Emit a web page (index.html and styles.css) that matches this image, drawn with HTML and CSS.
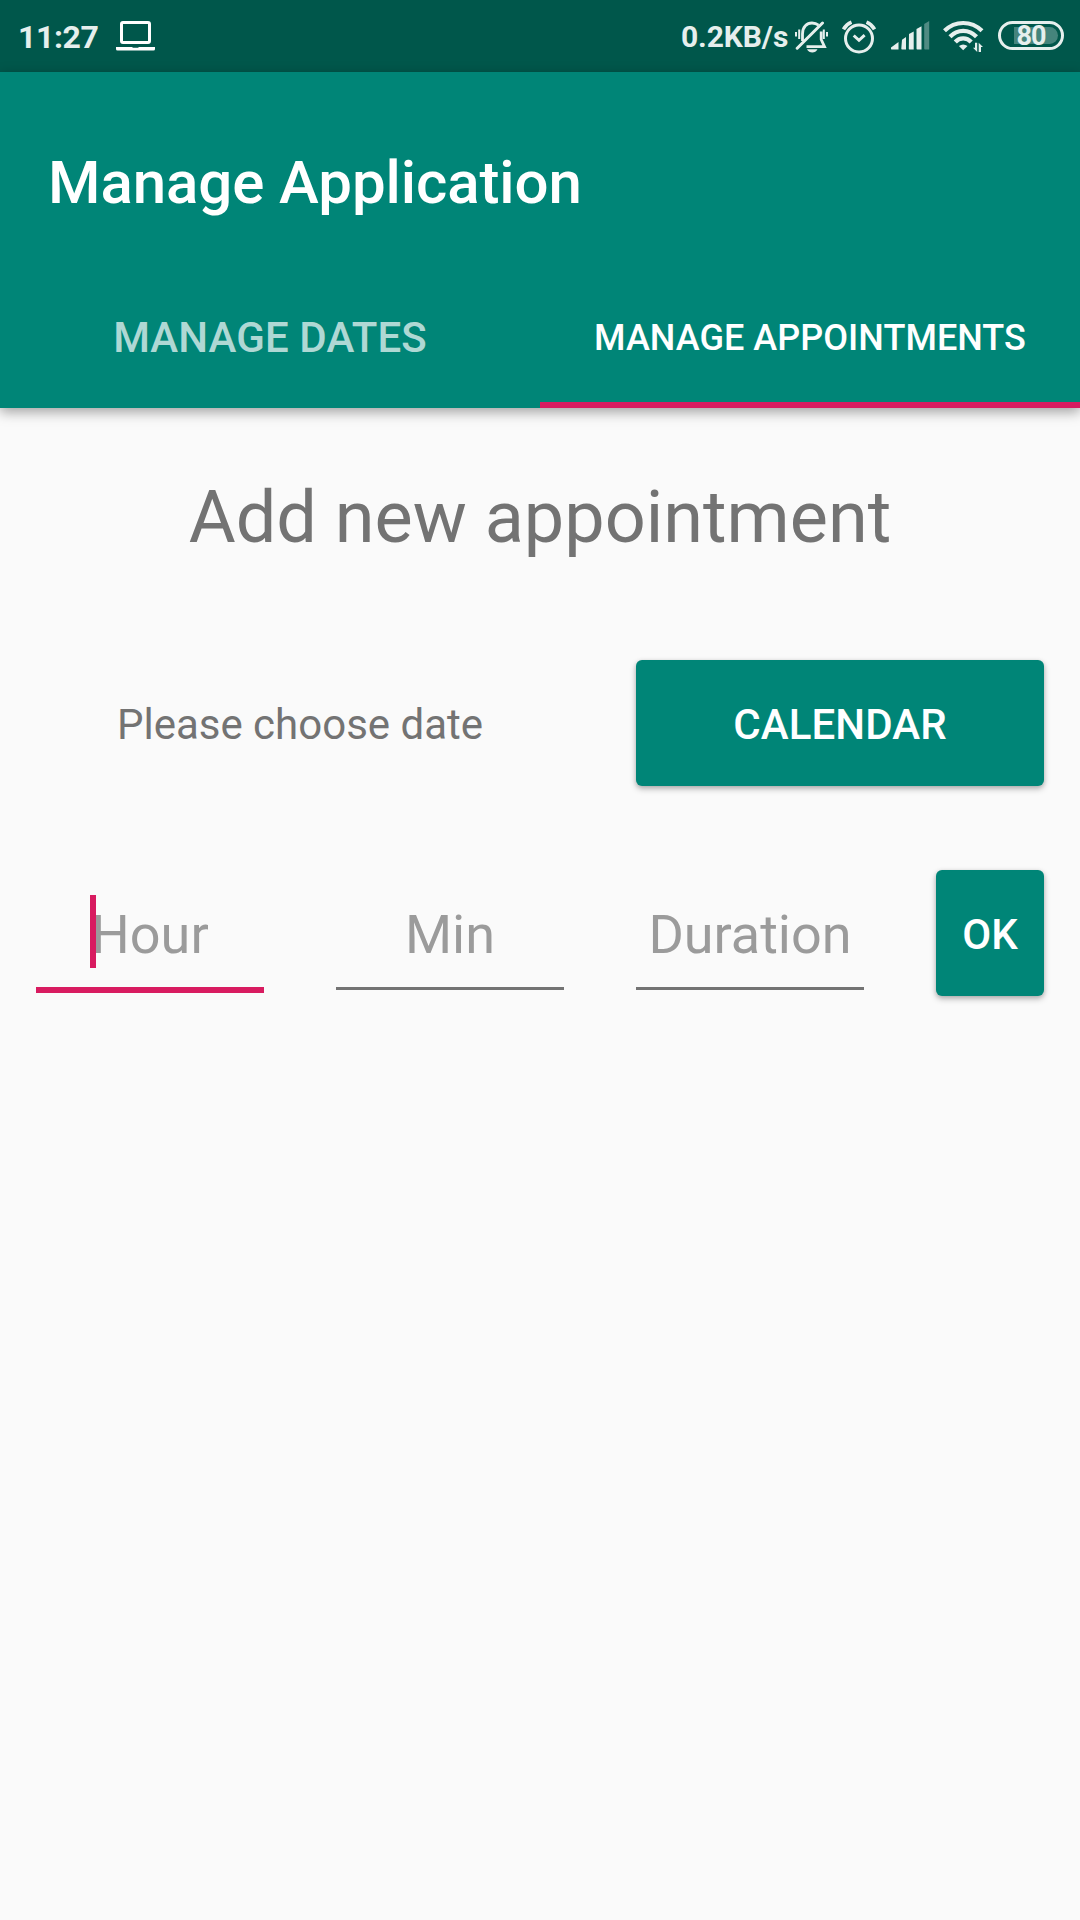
FILE: index.html
```html
<!DOCTYPE html>
<html lang="en">
<head>
<meta charset="utf-8">
<title>Manage Application</title>
<link rel="stylesheet" href="styles.css">
</head>
<body>
<div class="status-bar">
  <span class="clock">11:27</span>
  <svg class="laptop" width="40" height="32" viewBox="0 0 40 32">
    <rect x="5.5" y="2.5" width="28" height="20" rx="1.5" fill="none" stroke="#fff" stroke-width="3"/>
    <path d="M0 27h16l1 .8h5l1-.8h16v2q0 1.500-1.500 1.500h-36q-1.500 0-1.500-1.500z" fill="#fff"/>
  </svg>
  <div class="status-right">
    <span class="net-speed">0.2KB/s</span>
    <svg class="icon-bell" width="34" height="32" viewBox="0 0 34 32">
      <g fill="none" stroke="#e6efed" stroke-width="2.800">
        <path d="M7.500 20V13C7.500 5.500 12 2 17 2C19.500 2 21.800 2.800 23.500 4.200"/>
        <path d="M26.200 10.500V18.500L29.500 25.700H11.500"/>
        <path d="M2.200 27.200L27.500 2" stroke-width="3" stroke-linecap="round"/>
        <path d="M1 11v4.500M4.200 8.500v9.500M28.800 8.500v9.500M32 11v4.500" stroke-width="2"/>
      </g>
      <path d="M12 28.200h10.500q-1.800 3.300-5.200 3.300t-5.300-3.300z" fill="#e6efed"/>
    </svg>
    <svg class="icon-alarm" width="34" height="34" viewBox="0 0 34 34" fill="none" stroke="#e6efed">
      <circle cx="17" cy="18.500" r="13.500" stroke-width="3"/>
      <path d="M11.700 15.500L17 20.300L22.600 15.200" stroke-width="3"/>
      <path d="M1.500 9.300Q4.500 4.200 9.500 2.200M24.500 2.200Q29.500 4.200 32.500 9.300" stroke-width="3.600"/>
    </svg>
    <svg class="icon-signal" width="40" height="30" viewBox="0 0 40 30" fill="#e6efed">
      <path d="M0 28V26.500L7.500 21V28.500H.5zM11 18.700L15 16V28.500H11q-.7 0-.7-1zM18 13L22.700 10.500V28.500H18.500q-.7 0-.7-1zM25.500 8L30.500 5.200V28.500H26.300q-.8 0-.8-1z"/>
      <path d="M33.200 3L38.200 0V28.500H34q-.8 0-.8-1z" opacity=".35"/>
    </svg>
    <svg class="icon-wifi" width="42" height="34" viewBox="0 0 42 34">
      <g fill="none" stroke="#e6efed" stroke-width="4.200">
        <path d="M1.500 10.800Q9.500 3 20.200 3T39 10.800"/>
        <path d="M7 16.700Q12.500 10.800 20.200 10.800T33.500 16.700"/>
        <path d="M12.300 22Q15.500 18.400 20.200 18.400T28.200 22"/>
      </g>
      <path d="M15.900 26Q20.200 22.800 24.500 26L20.200 30.300z" fill="#e6efed"/>
      <path d="M34.200 22.800V32L30 27.700H32V22.800zM35.700 32V22.800L40 27.100H38V32z" fill="#e6efed"/>
    </svg>
    <div class="battery"><span class="battery-fill"></span><span class="battery-text">80</span></div>
  </div>
</div>
<header class="app-bar">
  <h1 class="app-title">Manage Application</h1>
  <nav class="tabs">
    <div class="tab">MANAGE DATES</div>
    <div class="tab tab-active">MANAGE APPOINTMENTS</div>
  </nav>
</header>
<main class="content">
  <h2 class="heading">Add new appointment</h2>
  <div class="date-row">
    <span class="prompt">Please choose date</span>
    <button class="button">CALENDAR</button>
  </div>
  <div class="time-row">
    <div class="field field-focused"><span class="hint">Hour<span class="caret"></span></span></div>
    <div class="field"><span class="hint">Min</span></div>
    <div class="field"><span class="hint">Duration</span></div>
    <button class="button">OK</button>
  </div>
</main>
</body>
</html>
```
FILE: styles.css
```css
* { box-sizing: border-box; }
body {
  margin: 0;
  width: 1080px;
  height: 1920px;
  overflow: hidden;
  background: #fafafa;
  color: #737373;
  font-family: Roboto, sans-serif;
}
svg { display: block; flex: none; }
.status-bar {
  height: 72px;
  background: #00574b;
  color: #e6efed;
  display: flex;
  align-items: flex-start;
  padding: 0 16px 0 18px;
  font-weight: 700;
  white-space: nowrap;
}
.clock { width: 98px; font-size: 32px; line-height: 38px; margin-top: 18px; letter-spacing: -.4px; }
.laptop { margin-top: 20px; }
.status-right { display: flex; align-items: flex-start; margin-left: auto; }
.net-speed { width: 114px; font-size: 30px; line-height: 36px; margin-top: 19px; letter-spacing: -.1px; }
.icon-bell { margin-top: 21px; }
.icon-alarm { margin: 20px 0 0 13px; }
.icon-signal { margin: 21px 0 0 15px; }
.icon-wifi { margin: 20px 0 0 12px; }
.battery {
  width: 66px;
  height: 29px;
  margin: 21px 0 0 13px;
  border: 3px solid #e6efed;
  border-radius: 15px;
  position: relative;
  text-align: center;
}
.battery-fill {
  position: absolute;
  left: 13px;
  top: 3px;
  width: 44px;
  height: 17px;
  border-radius: 0 9px 9px 0;
  background: rgba(230, 239, 237, .3);
}
.battery-text { position: relative; display: block; font-size: 27px; line-height: 24px; letter-spacing: -1px; }
.app-bar {
  height: 336px;
  background: #008577;
  color: #fff;
  display: flex;
  flex-direction: column;
  box-shadow: 0 4px 12px rgba(0, 0, 0, .36);
}
.app-title {
  margin: 0;
  height: 192px;
  padding: 29px 48px 0;
  font-size: 60px;
  line-height: 164px;
  font-weight: 500;
  letter-spacing: -.08px;
}
.tabs { display: grid; grid-template-columns: 1fr 1fr; height: 144px; }
.tab {
  height: 144px;
  font-size: 42px;
  line-height: 147px;
  font-weight: 500;
  letter-spacing: .1px;
  text-align: center;
  color: rgba(255, 255, 255, .7);
}
.tab-active { font-size: 36px; line-height: 149px; letter-spacing: .04px; color: #fff; box-shadow: inset 0 -6px #d81b60; }
.content { padding: 60px 36px 0; }
.heading {
  margin: 0;
  height: 192px;
  font-size: 72px;
  line-height: 99px;
  font-weight: 400;
  text-align: center;
}
.date-row { display: grid; grid-template-columns: 528px 408px; gap: 72px; height: 126px; padding-right: 0; }
.prompt { font-size: 42px; line-height: 129px; text-align: center; padding-right: 0; }
.button {
  height: 126px;
  border: 0;
  padding: 3px 0 0;
  border-radius: 6px;
  background: #008577;
  color: #fff;
  font: 500 42px/49px Roboto, sans-serif;
  letter-spacing: .1px;
  text-align: center;
  box-shadow: 0 3px 6px rgba(0, 0, 0, .26), 0 1px 4px rgba(0, 0, 0, .12);
}
.time-row {
  display: grid;
  grid-template-columns: 228px 228px 228px 108px;
  gap: 72px;
  margin-top: 84px;
}
.field {
  height: 120px;
  border-bottom: 3px solid #737373;
  text-align: center;
  font-size: 54px;
  line-height: 129px;
  color: #9b9b9b;
}
.field-focused { height: 123px; border-bottom: 6px solid #d81b60; }
.hint { position: relative; display: inline-block; }
.caret {
  position: absolute;
  left: -1px;
  top: 25px;
  width: 6px;
  height: 73px;
  background: #d81b60;
}
```
